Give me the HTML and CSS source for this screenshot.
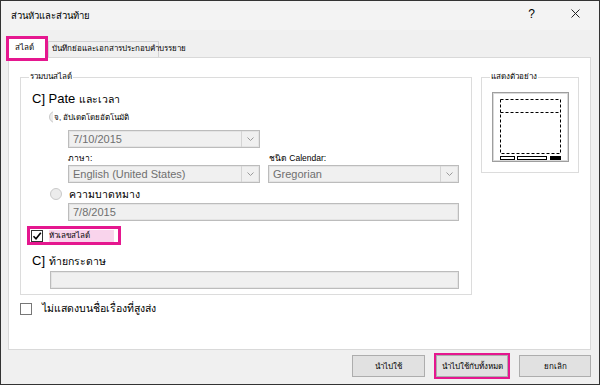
FILE: index.html
```html
<!DOCTYPE html>
<html lang="th">
<head>
    <meta charset="UTF-8">
    <meta name="viewport" content="width=device-width, initial-scale=1.0">
    <title>ส่วนหัวและส่วนท้าย</title>
    <link rel="stylesheet" href="styles.css">
</head>
<body>
    <div class="dialog">
        <div class="titlebar">
            <span class="title">ส่วนหัวและส่วนท้าย</span>
            <span class="help">?</span>
            <svg class="close" width="9" height="9" viewBox="0 0 9 9">
                <path d="M0.5 0.5L8.5 8.5M8.5 0.5L0.5 8.5" stroke="#222" stroke-width="1"/>
            </svg>
        </div>
        <div class="tabs">
            <div class="tab active">สไลด์</div>
            <div class="tab">บันทึกย่อและเอกสารประกอบคำบรรยาย</div>
        </div>
        <div class="panel">
            <div class="panel-row">
                <div class="group main-group">
                    <div class="group-title">รวมบนสไลด์</div>
                    <div class="check-line">C] Pate <span class="thai">และเวลา</span></div>
                    <div class="radio-row first">
                        <span class="radio"></span><span class="radio-text">จ, อัปเดตโดยอัตโนมัติ</span>
                    </div>
                    <div class="select date-select">
                        <span class="value">7/10/2015</span>
                        <span class="arrow"><svg width="7" height="4" viewBox="0 0 7 4"><path d="M0.5 0.5L3.5 3.5L6.5 0.5" fill="none" stroke="#9a9a9a"/></svg></span>
                    </div>
                    <div class="label-row">
                        <span class="label lang">ภาษา:</span>
                        <span class="label">ชนิด Calendar:</span>
                    </div>
                    <div class="select-row">
                        <div class="select lang-select">
                            <span class="value">English (United States)</span>
                            <span class="arrow"><svg width="7" height="4" viewBox="0 0 7 4"><path d="M0.5 0.5L3.5 3.5L6.5 0.5" fill="none" stroke="#9a9a9a"/></svg></span>
                        </div>
                        <div class="select cal-select">
                            <span class="value">Gregorian</span>
                            <span class="arrow"><svg width="7" height="4" viewBox="0 0 7 4"><path d="M0.5 0.5L3.5 3.5L6.5 0.5" fill="none" stroke="#9a9a9a"/></svg></span>
                        </div>
                    </div>
                    <div class="radio-row second">
                        <span class="radio"></span><span class="radio-text">ความบาดหมาง</span>
                    </div>
                    <div class="field fixed-field"><span class="value">7/8/2015</span></div>
                    <div class="mark-box">
                        <span class="checkbox">
                            <svg width="10" height="10" viewBox="0 0 10 10"><path d="M1.5 5.2L4 7.8L8.8 1.8" fill="none" stroke="#000" stroke-width="1.6"/></svg>
                        </span>
                        <span class="mark-text">หัวเลขสไลด์</span>
                    </div>
                    <div class="check-line">C] <span class="thai">ท้ายกระดาษ</span></div>
                    <div class="field footer-field"></div>
                </div>
                <div class="group preview-group">
                    <div class="group-title">แสดงตัวอย่าง</div>
                    <div class="preview">
                        <svg width="75" height="68" viewBox="0 0 75 68">
                            <rect x="7.5" y="6.5" width="60" height="54" fill="none" stroke="#000" stroke-dasharray="3 2"/>
                            <line x1="7.5" y1="19.5" x2="67.5" y2="19.5" stroke="#000" stroke-dasharray="3 2"/>
                            <rect x="7.5" y="63.5" width="14" height="3" fill="none" stroke="#000"/>
                            <rect x="24.5" y="63.5" width="29" height="3" fill="none" stroke="#000"/>
                            <rect x="57" y="63" width="11" height="4" fill="#000"/>
                        </svg>
                    </div>
                </div>
            </div>
            <div class="option-row">
                <span class="checkbox plain"></span>
                <span class="option-text">ไม่แสดงบนชื่อเรื่องที่สูงส่ง</span>
            </div>
        </div>
        <div class="buttons">
            <button class="btn">นำไปใช้</button>
            <button class="btn marked">นำไปใช้กับทั้งหมด</button>
            <button class="btn">ยกเลิก</button>
        </div>
    </div>
</body>
</html>
```

FILE: styles.css
```css
* {
    box-sizing: border-box;
}
body {
    margin: 0;
    font-family: "Liberation Sans", "Noto Sans", sans-serif;
    color: #000;
}
.dialog {
    width: 600px;
    height: 385px;
    border: 1px solid #333;
    background-color: #f0f0f0;
    overflow: hidden;
}
.titlebar {
    height: 29px;
    display: flex;
    align-items: center;
    padding-left: 10px;
    background-color: #f3f3f3;
}
.title {
    flex: 1;
    font-size: 9.5px;
}
.help {
    font-size: 12px;
    margin-right: 36px;
    margin-top: -4px;
}
.close {
    margin-right: 19px;
    margin-top: -4px;
}
.tabs {
    display: flex;
    align-items: flex-start;
    height: 21px;
    margin-top: 6px;
    padding-left: 5px;
}
.tab {
    font-size: 8px;
    white-space: nowrap;
}
.tab.active {
    position: relative;
    z-index: 1;
    width: 42px;
    height: 25px;
    border: 3px solid #e5178f;
    background-color: #fff;
    padding: 3px 0 0 6px;
    line-height: 12px;
}
.tab:not(.active) {
    width: 111px;
    height: 16px;
    margin-top: 5px;
    border: 1px solid #d2d2d2;
    border-bottom: none;
    padding-left: 3px;
    line-height: 14px;
}
.panel {
    width: 583px;
    height: 293px;
    margin-left: 7px;
    border: 1px solid #d9d9d9;
    background-color: #fff;
    padding: 19px 0 0 11px;
}
.panel-row {
    display: flex;
    align-items: flex-start;
}
.group {
    border: 1px solid #dcdcdc;
}
.group-title {
    width: fit-content;
    margin: -7px 0 0 8px;
    padding: 0 1px;
    background-color: #fff;
    font-size: 8px;
    line-height: 12px;
    white-space: nowrap;
}
.main-group {
    width: 452px;
    height: 218px;
}
.preview-group {
    width: 98px;
    height: 96px;
    margin-left: 9px;
}
.check-line {
    font-size: 13px;
    line-height: 16px;
    padding-left: 11px;
    margin-top: 8px;
}
.check-line .thai {
    font-size: 10.5px;
}
.check-line + .field {
    margin-top: 2px;
}
.radio-row {
    display: flex;
    align-items: center;
    height: 12px;
}
.radio-row.first {
    margin-top: 4px;
    padding-left: 28px;
}
.radio-row.second {
    margin-top: 5px;
    padding-left: 29px;
}
.radio {
    width: 12px;
    height: 12px;
    border-radius: 50%;
    border: 1px solid #c9c9c9;
    background-color: #ececec;
    flex-shrink: 0;
}
.radio-row.first .radio-text {
    margin-left: -8px;
    background-color: #fff;
    padding-left: 1px;
    font-size: 8px;
}
.radio-row.second .radio-text {
    margin-left: 7px;
    font-size: 10.5px;
}
.select,
.field {
    display: flex;
    align-items: center;
    height: 18px;
    border: 1px solid #bcbcbc;
    background-color: #f0f0f0;
    box-shadow: inset 0 0 0 1px #e4e4e4;
}
.value {
    flex: 1;
    padding-left: 4px;
    font-size: 11px;
    color: #6f6f6f;
    white-space: nowrap;
}
.arrow {
    width: 18px;
    height: 100%;
    border-left: 1px solid #d4d4d4;
    display: flex;
    align-items: center;
    justify-content: center;
}
.date-select {
    width: 192px;
    margin: 7px 0 0 47px;
}
.label-row {
    display: flex;
    height: 12px;
    margin-top: 4px;
    padding-left: 47px;
    font-size: 8.5px;
    line-height: 12px;
}
.label.lang {
    width: 201px;
}
.select-row {
    display: flex;
    gap: 8px;
    margin: 1px 0 0 47px;
}
.lang-select {
    width: 192px;
}
.cal-select {
    width: 191px;
}
.fixed-field {
    width: 391px;
    margin: 3px 0 0 47px;
}
.footer-field {
    width: 409px;
    margin-left: 29px;
}
.mark-box {
    display: flex;
    align-items: center;
    width: 94px;
    height: 19px;
    margin: 5px 0 0 6px;
    border: 3px solid #e5178f;
}
.checkbox {
    width: 12px;
    height: 12px;
    border: 1px solid #333;
    background-color: #fff;
    display: flex;
    align-items: center;
    justify-content: center;
    flex-shrink: 0;
}
.mark-box .checkbox {
    margin-left: 1px;
}
.mark-text {
    margin-left: 6px;
    padding-right: 6px;
    width: 65px;
    background-color: #f9d4ec;
    font-size: 8px;
    line-height: 12px;
    white-space: nowrap;
}
.checkbox.plain {
    border-color: #777;
}
.preview {
    width: 77px;
    height: 70px;
    margin: 9px 0 0 10px;
    border: 1px solid #9e9e9e;
    box-shadow: inset 0 0 0 1px #dadada;
}
.preview svg {
    display: block;
}
.option-row {
    display: flex;
    align-items: center;
    margin-top: 5px;
}
.option-text {
    margin-left: 10px;
    font-size: 10.5px;
}
.buttons {
    display: flex;
    justify-content: flex-end;
    gap: 11px;
    margin-top: 5px;
    padding-right: 8px;
}
.btn {
    width: 72px;
    height: 22px;
    border: 1px solid #adadad;
    background-color: #e1e1e1;
    font-family: inherit;
    font-size: 8px;
    padding: 0;
    color: #000;
    white-space: nowrap;
}
.btn:first-child {
    width: 73px;
}
.btn.marked {
    box-shadow: 0 0 0 2px #e5178f;
}
```
